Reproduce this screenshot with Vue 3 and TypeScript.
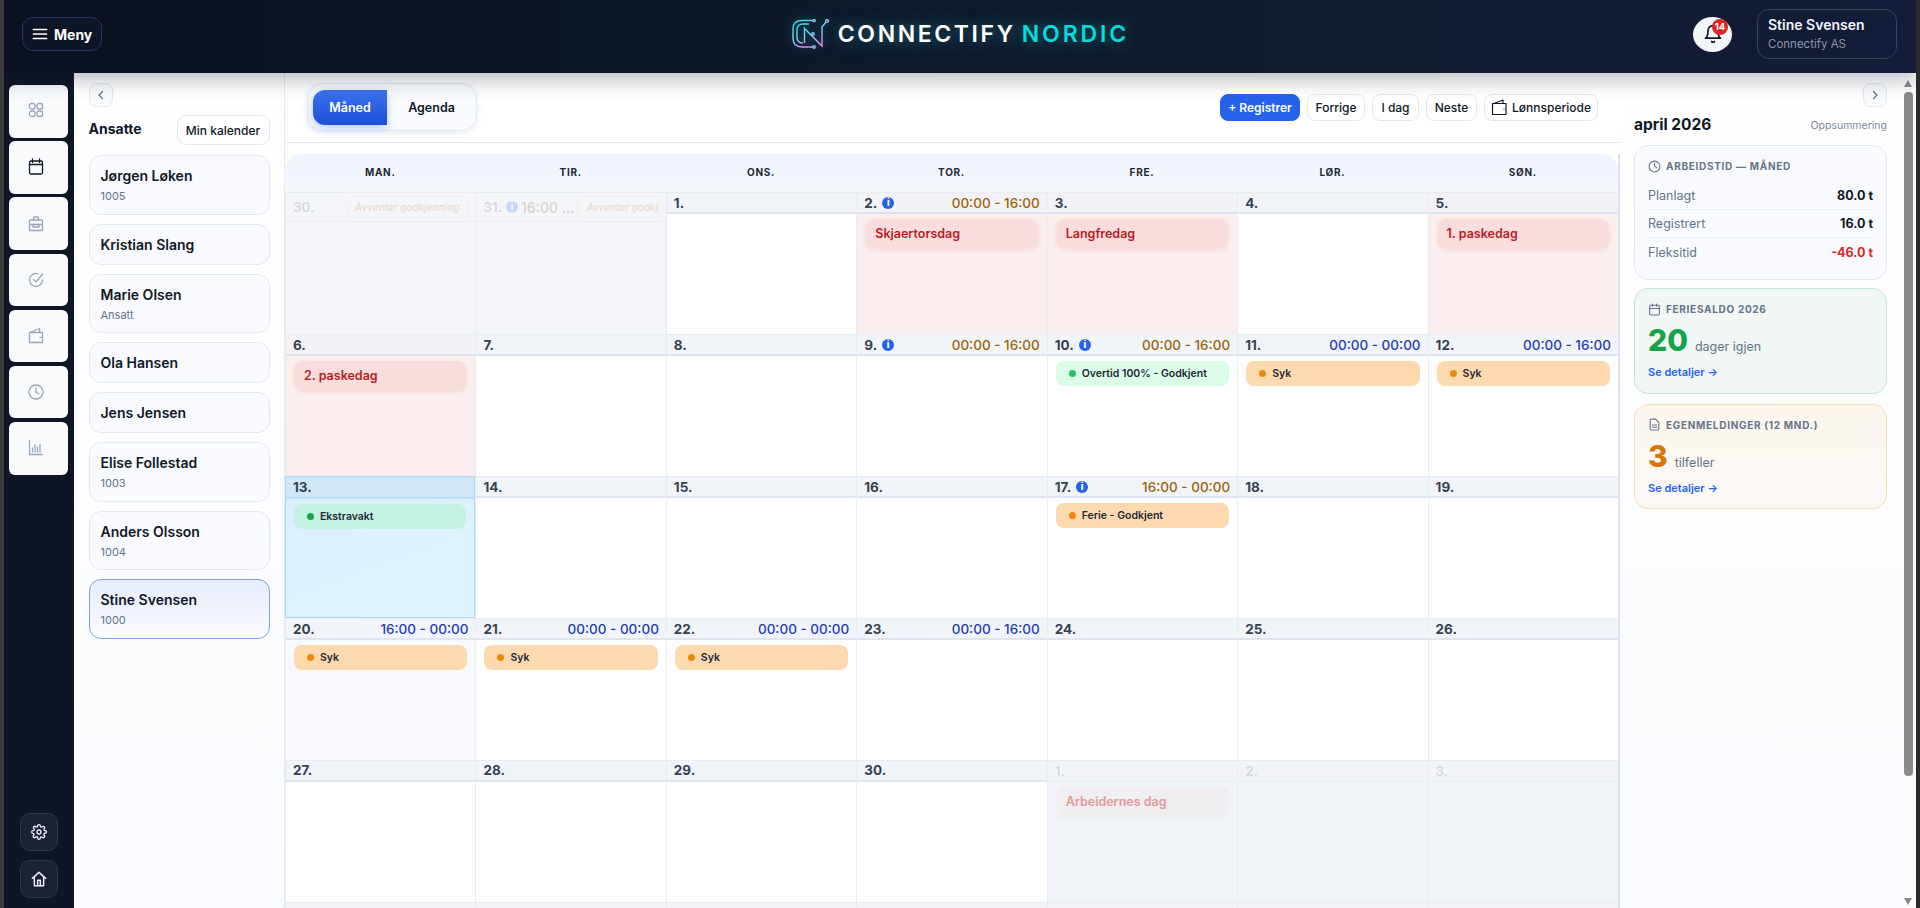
<template>
  <div class="app">
    <header class="topbar">
      <div class="topbar-left">
        <button class="menu-btn">
          <svg width="16" height="16" viewBox="0 0 16 16" fill="none" stroke="#fff" stroke-width="1.7" stroke-linecap="round">
            <path d="M1.5 3.5h13M1.5 8h13M1.5 12.5h13" />
          </svg>
          Meny
        </button>
      </div>
      <div class="logo">
        <svg class="logo-mark" width="37" height="30" viewBox="0 0 37 30" fill="none" stroke="url(#logoGrad)" stroke-width="1.4">
          <defs>
            <linearGradient id="logoGrad" x1="0" y1="0" x2="0.6" y2="1">
              <stop offset="0" stop-color="#25e0e0" />
              <stop offset="0.55" stop-color="#7fd0ee" />
              <stop offset="1" stop-color="#e58af0" />
            </linearGradient>
          </defs>
          <path d="M21 1.5H10Q1 1.5 1 10v9q0 9 9 9h11" />
          <path d="M17 5h-6q-6 0-6 6v7q0 6 6 6" />
          <path d="M12.5 24V9.5L30 27V8l4-5" />
          <circle cx="22" cy="1.5" r="1.2" />
          <circle cx="22" cy="28" r="1.2" />
          <circle cx="35" cy="2" r="1.4" />
          <circle cx="21" cy="15" r="1.3" />
        </svg>
        <span class="logo-text">CONNECTIFY</span>
        <span class="logo-text accent">NORDIC</span>
      </div>
      <div class="topbar-right">
        <div class="bell">
          <svg width="20" height="20" viewBox="0 0 24 24" fill="none" stroke="#111827" stroke-width="2" stroke-linecap="round" stroke-linejoin="round">
            <path d="M6 8a6 6 0 0 1 12 0c0 7 3 9 3 9H3s3-2 3-9" />
            <path d="M10.3 21a2 2 0 0 0 3.4 0" />
          </svg>
          <span class="bell-badge">14</span>
        </div>
        <div class="user-box">
          <div class="user-name">Stine Svensen</div>
          <div class="user-company">Connectify AS</div>
        </div>
      </div>
    </header>

    <div class="body">
      <nav class="sidebar">
        <div class="side-items">
          <div v-for="(icon, i) in sideIcons" :key="i" class="side-item">
            <svg width="16" height="18" viewBox="0 0 16 18" fill="none" :stroke="i === 1 ? '#111827' : '#9aa5b8'" stroke-width="1.3" stroke-linecap="round" stroke-linejoin="round">
              <path v-for="d in icon" :key="d" :d="d" />
            </svg>
          </div>
        </div>
        <div class="side-bottom">
          <button class="side-btn">
            <svg width="16" height="16" viewBox="0 0 24 24" fill="none" stroke="#e8eefc" stroke-width="2" stroke-linecap="round" stroke-linejoin="round">
              <circle cx="12" cy="12" r="3" />
              <path d="M19.4 15a1.7 1.7 0 0 0 .3 1.8l.1.1a2 2 0 1 1-2.9 2.9l-.1-.1a1.7 1.7 0 0 0-2.8 1.2V21a2 2 0 1 1-4 0v-.1A1.7 1.7 0 0 0 7 19.7l-.1.1A2 2 0 1 1 4 16.9l.1-.1a1.7 1.7 0 0 0-1.2-2.8H3a2 2 0 1 1 0-4h.1A1.7 1.7 0 0 0 4.3 7l-.1-.1A2 2 0 1 1 7.1 4l.1.1a1.7 1.7 0 0 0 2.8-1.2V3a2 2 0 1 1 4 0v.1a1.7 1.7 0 0 0 2.8 1.2l.1-.1A2 2 0 1 1 19.9 7l-.1.1a1.7 1.7 0 0 0 1.2 2.8h.1a2 2 0 1 1 0 4h-.1a1.7 1.7 0 0 0-1.6 1.1z" />
            </svg>
          </button>
          <button class="side-btn">
            <svg width="16" height="16" viewBox="0 0 24 24" fill="none" stroke="#e8eefc" stroke-width="2.2" stroke-linecap="round" stroke-linejoin="round">
              <path d="M2 11 12 2l10 9" />
              <path d="M5 9v13h14V9" />
              <path d="M10 22v-8h4v8" />
            </svg>
          </button>
        </div>
      </nav>

      <aside class="employees">
        <button class="collapse-btn">
          <svg width="10" height="10" viewBox="0 0 10 10" fill="none" stroke="#64748b" stroke-width="1.3" stroke-linecap="round" stroke-linejoin="round"><path d="M6.5 1.5 3 5l3.5 3.5" /></svg>
        </button>
        <div class="emp-head">
          <span class="emp-title">Ansatte</span>
          <button class="btn my-cal">Min kalender</button>
        </div>
        <div class="emp-list">
          <div v-for="e in employees" :key="e.name" :class="['emp-card', { selected: e.selected }]">
            <div class="emp-name">{{ e.name }}</div>
            <div v-if="e.sub" class="emp-sub">{{ e.sub }}</div>
          </div>
        </div>
      </aside>

      <main class="main">
        <div class="toolbar">
          <div class="view-toggle">
            <button class="view-btn active">Måned</button>
            <button class="view-btn">Agenda</button>
          </div>
          <div class="actions">
            <button class="btn primary">+ Registrer</button>
            <button class="btn w-prev">Forrige</button>
            <button class="btn w-today">I dag</button>
            <button class="btn w-next">Neste</button>
            <button class="btn w-period">
              <svg width="17" height="17" viewBox="0 0 17 17" fill="none" stroke="#111827" stroke-width="1.2" stroke-linejoin="round">
                <path d="M1.5 5v10.5H15V4.5H1.5z" />
                <path d="M1.5 5 12 1v3.5" />
                <path d="M12.5 10h1" />
              </svg>
              Lønnsperiode
            </button>
          </div>
        </div>

        <div class="calendar">
          <div class="weekdays">
            <div v-for="w in weekdays" :key="w" class="weekday">{{ w }}</div>
          </div>
          <div class="grid">
            <div v-for="d in days" :key="d.id" :class="['cell', d.kind]">
              <div class="cell-head">
                <span class="num">{{ d.num }}.</span>
                <span v-if="d.info" class="info">i</span>
                <span v-if="d.time" :class="['time', d.timeTone]">{{ d.time }}</span>
                <span v-if="d.pending" class="pending">Avventer godkjenning</span>
              </div>
              <div v-if="d.holiday" class="holiday">{{ d.holiday }}</div>
              <div v-if="d.event" :class="['event', d.event.tone]">
                <span class="dot"></span>{{ d.event.label }}
              </div>
            </div>
          </div>
        </div>
      </main>

      <aside class="summary">
        <div class="summary-top">
          <button class="collapse-btn">
            <svg width="10" height="10" viewBox="0 0 10 10" fill="none" stroke="#64748b" stroke-width="1.3" stroke-linecap="round" stroke-linejoin="round"><path d="M3.5 1.5 7 5 3.5 8.5" /></svg>
          </button>
        </div>
        <div class="summary-head">
          <span class="month">april 2026</span>
          <span class="summary-label">Oppsummering</span>
        </div>

        <section class="card hours-card">
          <div class="card-title">
            <svg width="13" height="13" viewBox="0 0 24 24" fill="none" stroke="#64748b" stroke-width="2" stroke-linecap="round"><circle cx="12" cy="12" r="10" /><path d="M12 6v6l4 2" /></svg>
            Arbeidstid — måned
          </div>
          <div v-for="r in hours" :key="r.label" class="hour-row">
            <span class="hour-label">{{ r.label }}</span>
            <span :class="['hour-value', { negative: r.negative }]">{{ r.value }}</span>
          </div>
        </section>

        <section class="card green">
          <div class="card-title">
            <svg width="13" height="13" viewBox="0 0 24 24" fill="none" stroke="#64748b" stroke-width="2" stroke-linecap="round"><rect x="3" y="4" width="18" height="18" rx="2" /><path d="M3 10h18M8 2v4M16 2v4" /></svg>
            Feriesaldo 2026
          </div>
          <div class="big-line"><span class="big">20</span><span class="big-unit">dager igjen</span></div>
          <a class="details">Se detaljer →</a>
        </section>

        <section class="card amber">
          <div class="card-title">
            <svg width="13" height="13" viewBox="0 0 24 24" fill="none" stroke="#64748b" stroke-width="2" stroke-linecap="round" stroke-linejoin="round"><path d="M14 2H6a2 2 0 0 0-2 2v16a2 2 0 0 0 2 2h12a2 2 0 0 0 2-2V8z" /><path d="M8 13h8M8 17h8" /></svg>
            Egenmeldinger (12 mnd.)
          </div>
          <div class="big-line"><span class="big">3</span><span class="big-unit">tilfeller</span></div>
          <a class="details">Se detaljer →</a>
        </section>
      </aside>

      <div class="scrollbar">
        <span class="arrow up"></span>
        <span class="thumb"></span>
        <span class="arrow down"></span>
      </div>
    </div>
  </div>
</template>

<script setup lang="ts">
interface CalEvent {
  label: string;
  tone: 'orange' | 'green' | 'mint';
}

interface Day {
  id: string;
  num: number;
  kind?: string;
  info?: boolean;
  time?: string;
  timeTone?: 'amber' | 'blue';
  pending?: boolean;
  holiday?: string;
  event?: CalEvent;
}

const weekdays = ['MAN.', 'TIR.', 'ONS.', 'TOR.', 'FRE.', 'LØR.', 'SØN.'];

const sideIcons: string[][] = [
  ['M1.5 3.5a2 2 0 0 1 2-2H5a2 2 0 0 1 2 2V5a2 2 0 0 1-2 2H3.5a2 2 0 0 1-2-2z', 'M9 3.5a2 2 0 0 1 2-2h1.5a2 2 0 0 1 2 2V5a2 2 0 0 1-2 2H11a2 2 0 0 1-2-2z', 'M1.5 11a2 2 0 0 1 2-2H5a2 2 0 0 1 2 2v1.5a2 2 0 0 1-2 2H3.5a2 2 0 0 1-2-2z', 'M9 11a2 2 0 0 1 2-2h1.5a2 2 0 0 1 2 2v1.5a2 2 0 0 1-2 2H11a2 2 0 0 1-2-2z'],
  ['M3 3h10a1.5 1.5 0 0 1 1.5 1.5v10A1.5 1.5 0 0 1 13 16H3a1.5 1.5 0 0 1-1.5-1.5v-10A1.5 1.5 0 0 1 3 3z', 'M1.5 6.5h13', 'M4.5 1v3.5', 'M11.5 1v3.5'],
  ['M2.5 5h11a1 1 0 0 1 1 1v8.5a1 1 0 0 1-1 1h-11a1 1 0 0 1-1-1V6a1 1 0 0 1 1-1z', 'M5.5 5V3a1 1 0 0 1 1-1h3a1 1 0 0 1 1 1v2', 'M1.5 9.5h13', 'M5 9.5V12h6V9.5'],
  ['M14.5 9A6.5 6.5 0 1 1 10 2.8', 'M5.5 8.5 8 11l6.5-8'],
  ['M1.5 6v9.5h13v-10h-13z', 'M2 5.5l9.5-4v4', 'M12 10.5h1'],
  ['M8 2a6.7 6.7 0 1 0 0 14A6.7 6.7 0 0 0 8 2z', 'M8 5v4.5l3 1'],
  ['M1.5 1.5v14h13', 'M4.5 9v4', 'M7 6v7', 'M9.5 8v5', 'M12 5.5V13'],
];

const employees = [
  { name: 'Jørgen Løken', sub: '1005' },
  { name: 'Kristian Slang' },
  { name: 'Marie Olsen', sub: 'Ansatt' },
  { name: 'Ola Hansen' },
  { name: 'Jens Jensen' },
  { name: 'Elise Follestad', sub: '1003' },
  { name: 'Anders Olsson', sub: '1004' },
  { name: 'Stine Svensen', sub: '1000', selected: true },
];

const hours = [
  { label: 'Planlagt', value: '80.0 t' },
  { label: 'Registrert', value: '16.0 t' },
  { label: 'Fleksitid', value: '-46.0 t', negative: true },
];

const syk: CalEvent = { label: 'Syk', tone: 'orange' };

const days: Day[] = [
  { id: 'm30', num: 30, kind: 'other pending-cell', pending: true },
  { id: 'm31', num: 31, kind: 'other pending-cell', info: true, time: '16:00 ...', timeTone: 'amber', pending: true },
  { id: 'a1', num: 1 },
  { id: 'a2', num: 2, kind: 'red', info: true, time: '00:00 - 16:00', timeTone: 'amber', holiday: 'Skjaertorsdag' },
  { id: 'a3', num: 3, kind: 'red', holiday: 'Langfredag' },
  { id: 'a4', num: 4 },
  { id: 'a5', num: 5, kind: 'red', holiday: '1. paskedag' },
  { id: 'a6', num: 6, kind: 'red', holiday: '2. paskedag' },
  { id: 'a7', num: 7 },
  { id: 'a8', num: 8 },
  { id: 'a9', num: 9, info: true, time: '00:00 - 16:00', timeTone: 'amber' },
  { id: 'a10', num: 10, info: true, time: '00:00 - 16:00', timeTone: 'amber', event: { label: 'Overtid 100% - Godkjent', tone: 'green' } },
  { id: 'a11', num: 11, time: '00:00 - 00:00', timeTone: 'blue', event: syk },
  { id: 'a12', num: 12, time: '00:00 - 16:00', timeTone: 'blue', event: syk },
  { id: 'a13', num: 13, kind: 'today', event: { label: 'Ekstravakt', tone: 'mint' } },
  { id: 'a14', num: 14 },
  { id: 'a15', num: 15 },
  { id: 'a16', num: 16 },
  { id: 'a17', num: 17, info: true, time: '16:00 - 00:00', timeTone: 'amber', event: { label: 'Ferie - Godkjent', tone: 'orange' } },
  { id: 'a18', num: 18 },
  { id: 'a19', num: 19 },
  { id: 'a20', num: 20, kind: 'soft', time: '16:00 - 00:00', timeTone: 'blue', event: syk },
  { id: 'a21', num: 21, time: '00:00 - 00:00', timeTone: 'blue', event: syk },
  { id: 'a22', num: 22, time: '00:00 - 00:00', timeTone: 'blue', event: syk },
  { id: 'a23', num: 23, time: '00:00 - 16:00', timeTone: 'blue' },
  { id: 'a24', num: 24 },
  { id: 'a25', num: 25 },
  { id: 'a26', num: 26 },
  { id: 'a27', num: 27 },
  { id: 'a28', num: 28 },
  { id: 'a29', num: 29 },
  { id: 'a30', num: 30 },
  { id: 'n1', num: 1, kind: 'other', holiday: 'Arbeidernes dag' },
  { id: 'n2', num: 2, kind: 'other' },
  { id: 'n3', num: 3, kind: 'other' },
  { id: 'n4', num: 4, kind: 'other' },
  { id: 'n5', num: 5, kind: 'other' },
  { id: 'n6', num: 6, kind: 'other' },
  { id: 'n7', num: 7, kind: 'other' },
  { id: 'n8', num: 8, kind: 'other', time: '00:00 - 00:00', timeTone: 'blue' },
  { id: 'n9', num: 9, kind: 'other', time: '00:00 - 00:00', timeTone: 'blue' },
  { id: 'n10', num: 10, kind: 'other', time: '00:00 - 16:00', timeTone: 'blue' },
];
</script>

<style scoped>
.app {
  height: 100vh;
  box-sizing: border-box;
  border-left: 4px solid #3b3b3b;
  border-right: 4px solid #2a2a2a;
  display: flex;
  flex-direction: column;
  overflow: hidden;
  font-family: Inter, "Liberation Sans", sans-serif;
  color: #111827;
  background: #fff;
}

button {
  font-family: inherit;
  cursor: pointer;
}

/* topbar */
.topbar {
  height: 73px;
  flex: none;
  box-sizing: border-box;
  display: grid;
  grid-template-columns: 1fr auto 1fr;
  align-items: center;
  background: linear-gradient(90deg, #0b1120 0%, #0f1a2c 50%, #131c38 100%);
  box-shadow: 0 6px 20px rgba(15, 23, 42, 0.3);
  position: relative;
  z-index: 2;
  padding: 0 19px 5px 18px;
}

.menu-btn {
  display: flex;
  align-items: center;
  gap: 6px;
  width: 80px;
  height: 34px;
  padding: 0 0 0 9px;
  background: #0e1526;
  border: 1px solid #2b2f66;
  border-radius: 11px;
  color: #fff;
  font-size: 14px;
  font-weight: 700;
}

.logo {
  display: flex;
  align-items: center;
  gap: 6px;
  margin-left: 2px;
}

.logo-mark {
  margin-right: 3px;
  filter: drop-shadow(0 0 4px rgba(34, 211, 238, 0.35));
}

.logo-text {
  font-size: 23px;
  font-weight: 600;
  letter-spacing: 2.6px;
  color: #fff;
  text-shadow: 0 0 16px rgba(45, 212, 220, 0.5);
}

.logo-text.accent {
  color: #05dcdc;
  letter-spacing: 2.9px;
}

.topbar-right {
  display: flex;
  justify-content: flex-end;
  align-items: center;
  gap: 25px;
}

.bell {
  position: relative;
  width: 39px;
  height: 35px;
  background: #f4f5f7;
  border-radius: 50%;
  display: flex;
  align-items: center;
  justify-content: center;
}

.bell-badge {
  position: absolute;
  top: 2px;
  right: 4px;
  width: 16px;
  height: 16px;
  border-radius: 50%;
  background: #dc2626;
  color: #fff;
  font-size: 9.5px;
  font-weight: 700;
  text-align: center;
  line-height: 16px;
}

.user-box {
  width: 140px;
  height: 50px;
  box-sizing: border-box;
  border: 1px solid #3a4358;
  border-radius: 12px;
  padding: 5px 10px;
}

.user-name {
  font-size: 14px;
  font-weight: 600;
  color: #f1f5f9;
  line-height: 20px;
}

.user-company {
  font-size: 11.5px;
  color: #8b94a7;
  line-height: 18px;
}

.body {
  flex: 1;
  min-height: 0;
  display: flex;
  position: relative;
}

/* sidebar */
.sidebar {
  width: 70px;
  flex: none;
  background: #0d1526;
  display: flex;
  flex-direction: column;
  justify-content: space-between;
  padding: 12px 5px 10px;
  box-sizing: border-box;
}

.side-items {
  display: flex;
  flex-direction: column;
  gap: 3.7px;
}

.side-item {
  width: 59px;
  height: 52.5px;
  box-sizing: border-box;
  background: #f8fafc;
  border-radius: 6px;
  display: flex;
  align-items: center;
  padding-left: 19px;
}

.side-bottom {
  display: flex;
  flex-direction: column;
  align-items: center;
  gap: 9.5px;
}

.side-btn {
  width: 38px;
  height: 38px;
  padding: 0;
  background: #1a2332;
  border: 1px solid #2c3646;
  border-radius: 10px;
  display: flex;
  align-items: center;
  justify-content: center;
}

/* employees */
.employees {
  width: 211px;
  flex: none;
  box-sizing: border-box;
  padding: 10px 14.5px;
  background: linear-gradient(180deg, #fff 0%, #fafbfe 100%);
  border-right: 1px solid #e6ebf3;
}

.collapse-btn {
  width: 24px;
  height: 24px;
  padding: 0;
  border: 1px solid #e2e8f0;
  border-radius: 7px;
  background: #f8fafc;
  display: flex;
  align-items: center;
  justify-content: center;
}

.emp-head {
  display: flex;
  align-items: center;
  justify-content: space-between;
  margin-top: 8px;
}

.emp-title {
  font-size: 14px;
  font-weight: 700;
  margin-top: -3px;
}

.btn {
  height: 27px;
  box-sizing: border-box;
  padding: 0;
  background: #fff;
  border: 1px solid #e2e8f0;
  border-radius: 8px;
  font-size: 12px;
  font-weight: 500;
  color: #111827;
  display: flex;
  align-items: center;
  justify-content: center;
  gap: 4px;
}

.my-cal {
  height: 30px;
  width: 93px;
  border-radius: 9px;
}

.emp-list {
  display: flex;
  flex-direction: column;
  gap: 9px;
  margin-top: 10px;
}

.emp-card {
  border: 1px solid #e2e8f0;
  border-radius: 12px;
  background: #f9fafd;
  padding: 10px 11px;
}

.emp-card.selected {
  border-color: #7ba1ee;
  background: linear-gradient(180deg, #e6ecfb 0%, #fbfcff 100%);
}

.emp-name {
  font-size: 14px;
  font-weight: 600;
  line-height: 19px;
  color: #111827;
}

.emp-sub {
  margin-top: 4px;
  font-size: 11px;
  line-height: 14.5px;
  color: #64748b;
}

/* main */
.main {
  flex: 1;
  min-width: 0;
  display: flex;
  flex-direction: column;
  overflow: hidden;
}

.toolbar {
  height: 70px;
  flex: none;
  box-sizing: border-box;
  border-bottom: 1px solid #e2e8f0;
  background: #fff;
  display: flex;
  align-items: center;
  justify-content: space-between;
  padding: 0 22px;
}

.view-toggle {
  display: flex;
  align-items: center;
  height: 48px;
  width: 170px;
  box-sizing: border-box;
  padding: 0 0 0 5px;
  margin-top: -1px;
  background: #f8fafd;
  border: 1px solid #e2e8f4;
  border-radius: 15px;
  box-shadow: 0 2px 6px rgba(148, 163, 184, 0.2);
}

.view-btn {
  height: 35px;
  flex: 1;
  padding: 0;
  border: none;
  background: none;
  font-size: 12.5px;
  font-weight: 600;
  color: #111827;
}

.view-btn.active {
  flex: none;
  width: 74px;
  color: #fff;
  background: linear-gradient(180deg, #3b74ee 0%, #1d4ed8 100%);
  border-radius: 12px 0 0 12px;
  box-shadow: 0 3px 8px rgba(37, 99, 235, 0.3);
}

.actions {
  display: flex;
  gap: 7px;
}

.btn.primary {
  width: 80px;
  background: #2563eb;
  border-color: #2563eb;
  color: #fff;
  font-weight: 600;
}

.w-prev {
  width: 58px;
}

.w-today {
  width: 47px;
}

.w-next {
  width: 51px;
}

.w-period {
  width: 114px;
}

/* calendar */
.calendar {
  margin-top: 11px;
  flex: 1;
  min-height: 0;
  overflow: hidden;
  border-right: 2px solid #dde3ee;
}

.weekdays {
  display: grid;
  grid-template-columns: repeat(7, 1fr);
  height: 38.4px;
  padding-bottom: 2px;
  box-sizing: border-box;
  background: linear-gradient(180deg, #eef3fd 0%, #f6f8fd 100%);
  border-radius: 16px 16px 0 0;
}

.weekday {
  display: flex;
  align-items: center;
  justify-content: center;
  font-size: 10px;
  font-weight: 700;
  letter-spacing: 0.7px;
  color: #1f2937;
}

.grid {
  display: grid;
  grid-template-columns: repeat(7, 1fr);
  grid-auto-rows: 141.9px;
}

.cell {
  box-sizing: border-box;
  min-width: 0;
  overflow: hidden;
  background: #fff;
  border-left: 1px solid #e8ecf3;
}

.cell-head {
  height: 22px;
  box-sizing: border-box;
  display: flex;
  align-items: center;
  gap: 4px;
  padding: 0 7px;
  background: #f1f5fa;
  border-top: 1px solid #e8ecf3;
  border-bottom: 2px solid #dfe5ef;
}

.num {
  font-size: 13.5px;
  font-weight: 700;
  color: #374151;
}

.info {
  width: 12px;
  height: 12px;
  margin-left: 1px;
  border-radius: 50%;
  background: #2563eb;
  color: #fff;
  font-size: 9.5px;
  font-weight: 800;
  line-height: 12px;
  text-align: center;
  flex: none;
}

.time {
  margin-left: auto;
  font-size: 13.5px;
  font-weight: 500;
  white-space: nowrap;
}

.time.amber {
  color: #a16207;
}

.time.blue {
  color: #1e40af;
}

.holiday {
  height: 29px;
  margin: 5px 9px 0;
  padding: 0 9px;
  border-radius: 8px;
  background: #f9dcdc;
  box-shadow: 0 2px 5px rgba(185, 28, 28, 0.1);
  color: #b91c1c;
  font-size: 12.5px;
  font-weight: 600;
  line-height: 29px;
}

.event {
  height: 25px;
  margin: 5px 8px 0;
  padding-left: 13px;
  border-radius: 8px;
  display: flex;
  align-items: center;
  gap: 6px;
  font-size: 10.5px;
  font-weight: 600;
  color: #1f2937;
  white-space: nowrap;
}

.dot {
  width: 7px;
  height: 7px;
  border-radius: 50%;
  flex: none;
}

.event.orange {
  background: #fdd9b0;
}

.event.orange .dot {
  background: #ea8a0c;
}

.event.green {
  background: #dcfce7;
}

.event.green .dot {
  background: #22c55e;
}

.event.mint {
  background: #c4f2e2;
}

.event.mint .dot {
  background: #16a34a;
}

.cell.red {
  background: #fbeeee;
}

.cell.red .cell-head {
  background: #f3f3f7;
}

.cell.soft {
  background: #f8f9fc;
}

.cell.today {
  background: linear-gradient(160deg, #d9effb 0%, #e0f4fe 100%);
  border: 1px solid #a9d9f6;
}

.cell.today .cell-head {
  background: #cfe7f6;
  border-top: none;
  border-bottom-color: #bfdff3;
}

.cell.other {
  background: #f1f4f8;
  border-left-color: #eaedf2;
}

.cell.other .cell-head {
  background: #f2f4f8;
  border-bottom: 1px solid #ebeef3;
}

.cell.other .num {
  color: #d5d9e0;
  font-weight: 600;
}

.cell.other .time {
  opacity: 0.2;
}

.cell.other .holiday {
  background: #f1eef1;
  color: #e09a9a;
  box-shadow: 0 1px 3px rgba(185, 28, 28, 0.04);
  height: 30px;
  line-height: 30px;
  margin-top: 5px;
}

.cell.pending-cell {
  background: #f4f6fa;
}

.cell.pending-cell .cell-head {
  height: 30px;
  gap: 3px;
  background: #f4f6fa;
}

.cell.pending-cell .time {
  margin-left: 0;
  font-size: 14px;
  color: #d9d3ca;
  opacity: 1;
}

.cell.pending-cell .info {
  opacity: 0.2;
}

.pending {
  margin-left: auto;
  flex: 0 1 auto;
  min-width: 0;
  overflow: hidden;
  white-space: nowrap;
  height: 22px;
  box-sizing: border-box;
  padding: 0 8px;
  border: 1px solid #f3efe9;
  border-radius: 7px;
  font-size: 10px;
  font-style: italic;
  font-weight: 500;
  line-height: 20px;
  color: #ebdcd0;
  background: #f4f6fa;
}

/* summary */
.summary {
  width: 284px;
  flex: none;
  box-sizing: border-box;
  padding: 10px 17px 0 14px;
  background: linear-gradient(180deg, #fff 0%, #fafbfe 100%);
}

.summary-top {
  display: flex;
  justify-content: flex-end;
}

.summary-head {
  display: flex;
  align-items: center;
  justify-content: space-between;
  margin-top: 2px;
  height: 30px;
}

.month {
  font-size: 15.5px;
  font-weight: 700;
}

.summary-label {
  font-size: 10.5px;
  color: #7b8798;
  margin-top: 3px;
}

.card {
  margin-top: 10px;
  box-sizing: border-box;
  border: 1px solid #e2e8f0;
  border-radius: 14px;
  background: #f9fafd;
  padding: 12px 13px;
  height: 105.5px;
}

.card.hours-card {
  height: 134.5px;
  margin-top: 6px;
}

.card.green {
  margin-top: 8.5px;
  background: #f0f7f4;
  border-color: #bfe8d0;
}

.card.amber {
  background: linear-gradient(180deg, #fcf6ed 0%, #fbf9f7 100%);
  border-color: #fadfb0;
}

.card-title {
  display: flex;
  align-items: center;
  gap: 5px;
  font-size: 10px;
  font-weight: 700;
  letter-spacing: 0.7px;
  text-transform: uppercase;
  color: #64748b;
  height: 16px;
}

.hour-row {
  display: flex;
  justify-content: space-between;
  align-items: center;
  height: 28px;
  box-sizing: border-box;
  font-size: 12.5px;
  border-bottom: 1px solid #e8ecf3;
}

.card-title + .hour-row {
  margin-top: 8px;
}

.hour-row:last-child {
  border-bottom: none;
}

.hour-label {
  color: #64748b;
}

.hour-value {
  font-weight: 700;
  color: #111827;
}

.hour-value.negative {
  color: #dc2626;
}

.big-line {
  display: flex;
  align-items: baseline;
  gap: 7px;
  margin-top: 5px;
  height: 36px;
}

.big {
  font-size: 30px;
  font-weight: 800;
  line-height: 36px;
}

.green .big {
  color: #16a34a;
}

.amber .big {
  color: #d97706;
}

.big-unit {
  font-size: 12.5px;
  color: #64748b;
}

.details {
  display: block;
  margin-top: 7px;
  font-size: 11px;
  font-weight: 600;
  color: #2563eb;
}

/* fake page scrollbar, the calendar continues below the fold */
.scrollbar {
  width: 12px;
  flex: none;
  display: flex;
  flex-direction: column;
  align-items: flex-start;
  background: #fbfcfe;
}

.thumb {
  display: block;
  width: 9px;
  height: 684px;
  margin-top: 5px;
  border-radius: 4px;
  background: #8a8a8a;
}

.arrow {
  display: block;
  width: 0;
  height: 0;
  border-left: 4.5px solid transparent;
  border-right: 4.5px solid transparent;
}

.arrow.up {
  margin-top: 7px;
  border-bottom: 7px solid #8a8a8a;
}

.arrow.down {
  margin-top: auto;
  margin-bottom: 3px;
  border-top: 7px solid #8a8a8a;
}
</style>

<style>
html,
body {
  margin: 0;
  overflow: hidden;
}
</style>
